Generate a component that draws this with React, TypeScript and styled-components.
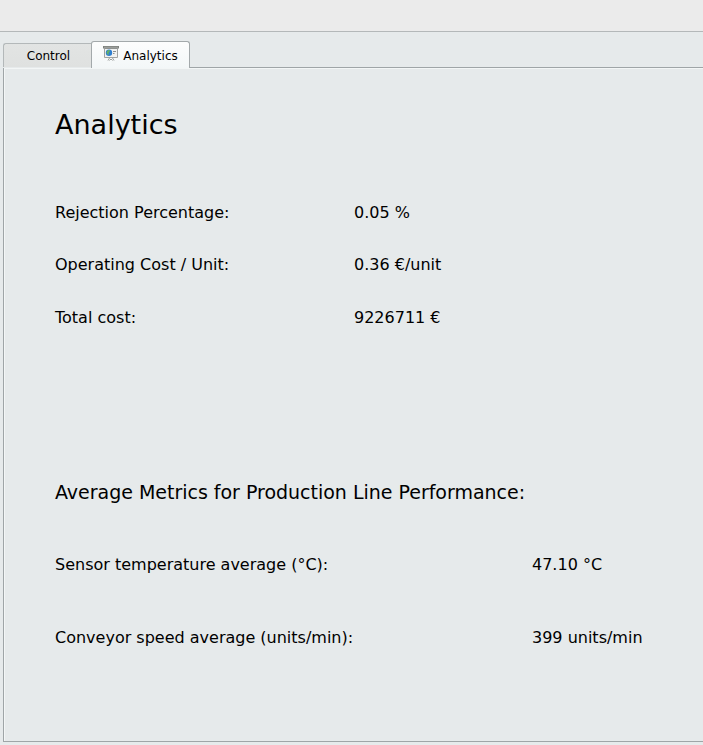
import React from "react";
import styled, { createGlobalStyle } from "styled-components";

const GlobalStyle = createGlobalStyle`
  * { box-sizing: border-box; }
  html, body { margin: 0; background: #e6eaeb; overflow: hidden; }
  body { font-family: "DejaVu Sans", sans-serif; color: #000; }
`;

const Window = styled.div`
  width: 703px;
  height: 745px;
  display: flex;
  flex-direction: column;
  overflow: hidden;
`;

const Toolbar = styled.header`
  flex: 0 0 32px;
  background: #ebebeb;
  border-bottom: 1px solid #b4b8b9;
`;

const TabBar = styled.nav`
  flex: 0 0 36px;
  display: flex;
  align-items: flex-start;
  padding: 9px 0 0 3px;
  background: linear-gradient(#9fa5a7, #9fa5a7) 190px 35px / 100% 1px no-repeat;
`;

const Tab = styled.button<{ $active?: boolean }>`
  display: flex;
  align-items: center;
  justify-content: center;
  flex: none;
  width: ${(p) => (p.$active ? "99px" : "88px")};
  height: ${(p) => (p.$active ? "27px" : "24px")};
  margin-top: ${(p) => (p.$active ? "0" : "2px")};
  padding: ${(p) => (p.$active ? "1px 0 0" : "1px 0 0 2px")};
  gap: 4px;
  font: 12px/16px "DejaVu Sans", sans-serif;
  color: #000;
  border: 1px solid ${(p) => (p.$active ? "#a3a9ab" : "#b3b8b9")};
  border-right-width: ${(p) => (p.$active ? "1px" : "0")};
  border-bottom: 0;
  border-radius: ${(p) => (p.$active ? "3px 3px 0 0" : "3px 0 0 0")};
  background: ${(p) => (p.$active ? "linear-gradient(#fcfdfd, #f3f7f8)" : "linear-gradient(#e2e4e3, #dfe1e0)")};
`;

const Panel = styled.main`
  flex: 0 0 674px;
  margin-left: 3px;
  border-left: 1px solid #9fa5a7;
  border-bottom: 1px solid #9fa5a7;
  box-shadow: inset 1px 1px #f3f6f6;
  padding: 39px 0 0 51px;
`;

const Title = styled.h1`
  margin: 0 0 60px;
  font-size: 27px;
  line-height: 36px;
  font-weight: 400;
`;

const Subtitle = styled.h2`
  margin: 117px 0 48px;
  font-size: 19px;
  line-height: 30px;
  font-weight: 400;
  letter-spacing: -0.015px;
`;

const Metrics = styled.dl<{ $label: number; $rows: string }>`
  margin: 0;
  display: grid;
  grid-template-columns: ${(p) => p.$label}px 1fr;
  grid-template-rows: ${(p) => p.$rows};
  font-size: 16px;
  line-height: 20px;
`;

const Label = styled.dt``;
const Value = styled.dd`
  margin: 0;
`;

const Icon = styled.svg`
  flex: none;
  margin-top: -3px;
`;

function PresentationIcon() {
  return (
    <Icon width="16" height="16" viewBox="0 0 16 16" aria-hidden="true">
      <path d="M1.5 2.5h13v9h-13z" fill="#f1f2f1" stroke="#a0a3a1" />
      <path d="M0 0h16v2.5H0z" fill="#7d817e" />
      <path d="M1 .8h14v.9H1z" fill="#a6aaa7" />
      <circle cx="6" cy="6.7" r="3.2" fill="#2f7fd0" />
      <path d="M5 4l2 .3L6.5 6 5.5 7l.5 1.8L4.6 8.6 3.4 6.6z" fill="#63b069" />
      <path d="M10 5.5h3M10 7.5h1.5" stroke="#8c908d" />
      <path d="M6.5 12L5 14.5M9.5 12l1.5 2.5M6.5 14.5L8 13l1.5 1.5" fill="none" stroke="#9b9f9c" />
    </Icon>
  );
}

export default function App() {
  return (
    <Window>
      <GlobalStyle />
      <Toolbar />
      <TabBar>
        <Tab>Control</Tab>
        <Tab $active>
          <PresentationIcon />
          Analytics
        </Tab>
      </TabBar>
      <Panel>
        <Title>Analytics</Title>
        <Metrics $label={299} $rows="52px 53px 52px">
          <Label>Rejection Percentage:</Label>
          <Value>0.05 %</Value>
          <Label>Operating Cost / Unit:</Label>
          <Value>0.36 €/unit</Value>
          <Label>Total cost:</Label>
          <Value>9226711 €</Value>
        </Metrics>
        <Subtitle>Average Metrics for Production Line Performance:</Subtitle>
        <Metrics $label={477} $rows="73px 73px">
          <Label>Sensor temperature average (°C):</Label>
          <Value>47.10 °C</Value>
          <Label>Conveyor speed average (units/min):</Label>
          <Value>399 units/min</Value>
        </Metrics>
      </Panel>
    </Window>
  );
}
